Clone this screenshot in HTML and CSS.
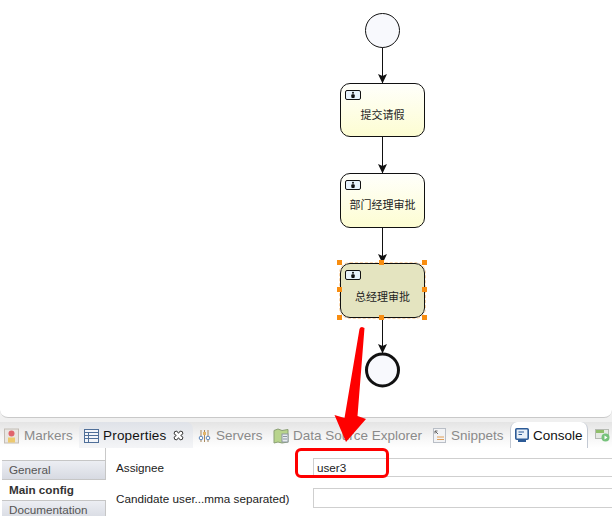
FILE: index.html
```html
<!DOCTYPE html>
<html lang="zh">
<head>
<meta charset="utf-8">
<title>Process editor</title>
<link rel="stylesheet" href="styles.css">
</head>
<body>
<div class="app">
  <main class="canvas">
    <svg class="edges" width="612" height="417" viewBox="0 0 612 417">
      <defs>
        <marker id="head" markerWidth="9" markerHeight="10" refX="4.5" refY="9" orient="0" markerUnits="userSpaceOnUse">
          <path d="M0 0 L4.500 2 L9 0 L4.500 9.500 Z" fill="#111"/>
        </marker>
      </defs>
      <circle class="start" cx="382.5" cy="30.5" r="17"/>
      <circle class="end" cx="382.5" cy="370" r="16"/>
      <path class="flow" marker-end="url(#head)" d="M382.5 47.500V83"/>
      <path class="flow" marker-end="url(#head)" d="M382.5 137V173"/>
      <path class="flow" marker-end="url(#head)" d="M382.5 228V263"/>
      <path class="flow" marker-end="url(#head)" d="M382.5 318V353"/>
    </svg>

    <div class="task task-a">
      <svg class="user-mark" width="16" height="10" viewBox="0 0 16 10"><rect x=".5" y=".5" width="15" height="9" rx="1.500" fill="#e8f3fb" stroke="#111"/><circle cx="8" cy="2.800" r="1" fill="#111"/><rect x="6.300" y="4.300" width="3.400" height="3.800" rx="1" fill="#111"/></svg>
      <span class="task-label">提交请假</span>
    </div>
    <div class="task task-b">
      <svg class="user-mark" width="16" height="10" viewBox="0 0 16 10"><rect x=".5" y=".5" width="15" height="9" rx="1.500" fill="#e8f3fb" stroke="#111"/><circle cx="8" cy="2.800" r="1" fill="#111"/><rect x="6.300" y="4.300" width="3.400" height="3.800" rx="1" fill="#111"/></svg>
      <span class="task-label">部门经理审批</span>
    </div>
    <div class="task task-c">
      <svg class="user-mark" width="16" height="10" viewBox="0 0 16 10"><rect x=".5" y=".5" width="15" height="9" rx="1.500" fill="#e8f3fb" stroke="#111"/><circle cx="8" cy="2.800" r="1" fill="#111"/><rect x="6.300" y="4.300" width="3.400" height="3.800" rx="1" fill="#111"/></svg>
      <span class="task-label">总经理审批</span>
      <i class="handle h-tl"></i><i class="handle h-tc"></i><i class="handle h-tr"></i>
      <i class="handle h-ml"></i><i class="handle h-mr"></i>
      <i class="handle h-bl"></i><i class="handle h-bc"></i><i class="handle h-br"></i>
    </div>
  </main>

  <section class="panel">
    <nav class="tabs">
      <div class="tab dim tab-markers">
        <svg width="15" height="16" viewBox="0 0 15 16"><rect x=".5" y="1" width="14" height="14" fill="#e9e6e2" stroke="#c4bdb5"/><circle cx="7.500" cy="5.500" r="3" fill="#e0646c"/><rect x="4" y="9.500" width="7" height="5" fill="#edc96f"/></svg>
        <span>Markers</span>
      </div>
      <div class="tab active-grey tab-properties">
        <svg width="15" height="14" viewBox="0 0 15 14"><rect x=".5" y=".5" width="14" height="13" fill="#f4f6fa" stroke="#4f6f99"/><path d="M.5 3.500H14.500M.5 6.500H14.500M.5 9.500H14.500M4.500 3.500V13.500" stroke="#4f6f99" fill="none"/></svg>
        <span class="tab-title prop-title">Properties</span>
        <svg class="close" width="11" height="11" viewBox="0 0 10 10"><path d="M1.500 1.500 L3.500 1 L5 3 L6.500 1 L8.500 1.500 L9 3.500 L7 5 L9 6.500 L8.500 8.500 L6.500 9 L5 7 L3.500 9 L1.500 8.500 L1 6.500 L3 5 L1 3.500 Z" fill="#fff" stroke="#333" stroke-width=".9"/></svg>
      </div>
      <div class="tab dim tab-servers">
        <svg width="13" height="14" viewBox="0 0 13 14"><path d="M3 1V13M10 1V13M6.500 1V13" stroke="#a9895c"/><circle cx="3" cy="9" r="1.800" fill="#fff" stroke="#5b86bb"/><circle cx="10" cy="9" r="1.800" fill="#fff" stroke="#5b86bb"/><rect x="5" y="3" width="3" height="3" fill="#e2b56a"/></svg>
        <span>Servers</span>
      </div>
      <div class="tab dim tab-dse">
        <svg width="16" height="16" viewBox="0 0 16 16"><path d="M1 2.500L5 1L9 2.500L15 1.500V14L9 15L5 14L1 15Z" fill="#b8d48c" stroke="#8a9f74"/><rect x="9" y="6" width="6" height="8" fill="#e9edf0" stroke="#8b96a0"/><path d="M10 8.500H14M10 11H14" stroke="#8b96a0"/></svg>
        <span>Data Source Explorer</span>
      </div>
      <div class="tab dim tab-snippets">
        <svg width="13" height="15" viewBox="0 0 13 15"><rect x=".5" y=".5" width="12" height="14" fill="#f2f3f5" stroke="#b9bec6"/><path d="M2 3L5 6M2 3H4.500M2 3V5.500" stroke="#666" fill="none"/><path d="M4 9H11M4 11.500H11" stroke="#e0a05a"/></svg>
        <span>Snippets</span>
      </div>
      <div class="tab active-white tab-console">
        <svg width="14" height="15" viewBox="0 0 14 15"><rect x=".8" y=".8" width="12.400" height="10.400" rx="1" fill="#e9f0f8" stroke="#2d5b97" stroke-width="1.600"/><path d="M3.500 4H9M3.500 6.500H7" stroke="#2d5b97"/><rect x="3" y="12" width="8" height="2" fill="#2d5b97"/></svg>
        <span class="tab-title">Console</span>
      </div>
      <div class="tab tab-extra">
        <svg width="15" height="13" viewBox="0 0 15 13"><rect x=".5" y=".5" width="13" height="9" fill="#e5e9e3" stroke="#b5bab2"/><rect x="1" y="1" width="8" height="3" fill="#8fbf6a"/><circle cx="10.500" cy="8.500" r="4" fill="#76c27b"/><path d="M9.500 6.500L12.500 8.500L9.500 10.500Z" fill="#fff"/></svg>
      </div>
    </nav>

    <div class="props">
      <aside class="side">
        <div class="side-stub"></div>
        <div class="side-item">General</div>
        <div class="side-item side-selected">Main config</div>
        <div class="side-item">Documentation</div>
      </aside>
      <form class="fields">
        <div class="field">
          <label class="field-label">Assignee</label>
          <div class="field-input">user3</div>
        </div>
        <div class="field">
          <label class="field-label">Candidate user...mma separated)</label>
          <div class="field-input"></div>
        </div>
      </form>
    </div>
  </section>

  <div class="callout"></div>
  <svg class="red-arrow" width="50" height="125" viewBox="0 0 50 125">
    <path d="M25.500 2 Q26 0 28 0 L30.500 1 L23.500 89 L32 92 L12 115 L0.500 88 L10.500 91 Z" fill="#fe0000"/>
  </svg>
</div>
</body>
</html>
```

FILE: styles.css
```css
* { box-sizing: border-box; }

html, body {
  margin: 0;
  padding: 0;
  height: 100%;
  overflow: hidden;
  background: #f0f0f0;
}

.app {
  position: relative;
  width: 612px;
  height: 516px;
  display: flex;
  flex-direction: column;
  font-family: "Liberation Sans", Arial, sans-serif;
  color: #222;
  overflow: hidden;
}

/* diagram */
.canvas {
  position: relative;
  flex: 0 0 418px;
  background: #fff;
  border-bottom: 1px solid #c9c9c9;
  border-radius: 0 0 8px 8px;
}

.edges { position: absolute; left: 0; top: 0; }
.start { fill: #f8f9fd; stroke: #111; stroke-width: 1; }
.end { fill: #f8f9fd; stroke: #111; stroke-width: 3; }
.flow { stroke: #111; stroke-width: 1; fill: none; }

.task {
  position: absolute;
  left: 340px;
  width: 85px;
  display: flex;
  align-items: center;
  justify-content: center;
  border: 1px solid #111;
  border-radius: 10px;
  background: linear-gradient(#fffffb, #fdfdd2);
}
.task-a { top: 83px; height: 54px; }
.task-b { top: 173px; height: 55px; }
.task-c {
  top: 263px;
  height: 55px;
  background: #e4e4c0;
  outline: 1px dashed #fad7ae;
}

.user-mark { position: absolute; left: 4px; top: 6px; }

.task-label {
  font-family: "Noto Sans CJK SC", sans-serif;
  font-size: 11px;
  line-height: 14px;
  color: #222;
  padding-top: 7px;
  white-space: nowrap;
}
.task-c .task-label { padding-top: 10px; }

.handle {
  position: absolute;
  width: 5px;
  height: 5px;
  background: #f88d10;
}
.h-tl { left: -4px; top: -4px; }
.h-tc { left: 38px; top: -4px; }
.h-tr { right: -3px; top: -4px; }
.h-ml { left: -4px; top: 23px; }
.h-mr { right: -3px; top: 23px; }
.h-bl { left: -4px; bottom: -3px; }
.h-bc { left: 38px; bottom: -3px; }
.h-br { right: -3px; bottom: -3px; }

/* tabs */
.panel {
  flex: 1;
  display: flex;
  flex-direction: column;
  padding-top: 4px;
  background: linear-gradient(#f0f0f0 0, #f0f0f0 4px, #fff 4px);
}

.tabs {
  display: flex;
  align-items: stretch;
  height: 26px;
  background: linear-gradient(#e4e4e4, #f6f6f6 60%, #fff);
  font-size: 13.500px;
}

.tab {
  display: flex;
  align-items: center;
  gap: 5px;
  padding-top: 1px;
  color: #8a8a8a;
  white-space: nowrap;
}

.tab-markers { width: 79px; padding-left: 4px; }
.tab-properties {
  width: 114px;
  padding-left: 5px;
  gap: 4px;
  background: linear-gradient(#dfe2e8, #f4f5f7);
  border-radius: 7px 7px 0 0;
}
.tab-servers { width: 80px; padding-left: 5px; }
.tab-dse { width: 160px; gap: 4px; }
.tab-snippets { width: 77px; }
.tab-console {
  width: 78px;
  padding-left: 4px;
  gap: 4px;
  background: #fff;
  border-radius: 7px 7px 0 0;
  border-right: 1px solid #c3c9d3;
  border-left: 1px solid #c3c9d3;
}
.tab-extra { padding-left: 7px; }
.tab-title { color: #111; }
.prop-title { letter-spacing: .2px; }
.close { margin-left: 2px; }

/* property sheet */
.props {
  flex: 1;
  display: flex;
  background: #fff;
}

.side {
  flex: 0 0 106px;
  padding-left: 2px;
  font-size: 11.700px;
  color: #555;
}
.side-stub {
  height: 12px;
  margin-left: 103px;
  width: 1px;
  background: #c9c9c9;
}
.side-item {
  height: 20px;
  line-height: 17px;
  padding-left: 7px;
  background: linear-gradient(#eceef3, #d7dae2);
  border-top: 1px solid #c6c6c6;
  border-bottom: 1px solid #c6c6c6;
  border-right: 1px solid #c6c6c6;
}
.side-selected {
  line-height: 19px;
  background: #fff;
  border: 0;
  color: #333;
  font-weight: bold;
}

.fields {
  flex: 1;
  padding: 10px 0 0 10px;
  display: flex;
  flex-direction: column;
  gap: 11px;
  font-size: 11.700px;
  color: #222;
}
.field {
  display: flex;
  align-items: center;
  height: 19px;
}
.field:last-child { height: 20px; }
.field-label { width: 197px; white-space: nowrap; }
.field-input {
  flex: 1;
  height: 100%;
  line-height: 17px;
  padding-left: 3px;
  border: 1px solid #cfcfcf;
  border-right: 0;
  background: #fff;
}

/* annotation */
.callout {
  position: absolute;
  left: 295px;
  top: 448px;
  width: 94px;
  height: 30px;
  border: 3px solid #fe0000;
  border-radius: 6px;
}
.red-arrow {
  position: absolute;
  left: 334px;
  top: 327px;
}
```
